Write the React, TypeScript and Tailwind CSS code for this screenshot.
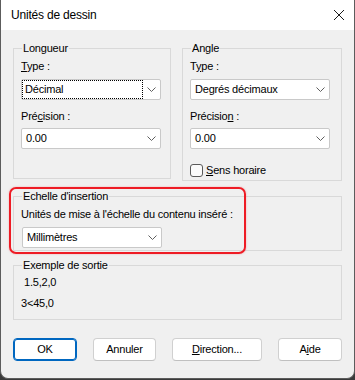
import { ReactNode } from "react";

function Chevron() {
  return (
    <svg width="9" height="5" viewBox="0 0 9 5" className="text-[#5f5f5f] shrink-0">
      <path d="M0.5 0.5 L4.5 4.5 L8.5 0.5" fill="none" stroke="currentColor" strokeWidth="1" />
    </svg>
  );
}

function Select({ value, focused }: { value: string; focused?: boolean }) {
  return (
    <div className="w-[140px] h-[21px] bg-white border border-[#c9c9c9] rounded-[2px] flex items-center justify-between pr-[4px]">
      {focused ? (
        <span className="h-[19px] w-[121px] border border-dotted border-black flex items-center pl-[2px]">
          {value}
        </span>
      ) : (
        <span className="pl-[4px]">{value}</span>
      )}
      <Chevron />
    </div>
  );
}

function Group({ title, className, children }: { title: string; className: string; children: ReactNode }) {
  return (
    <fieldset className={`border border-[#d9d9d9] px-[7px] ${className}`}>
      <legend className="px-[1px] ml-[1px] leading-[16px]">{title}</legend>
      {children}
    </fieldset>
  );
}

function Button({ children, primary, w }: { children: ReactNode; primary?: boolean; w: string }) {
  return (
    <div
      className={`${w} h-[23px] rounded-[4px] bg-white flex items-center justify-center ${
        primary ? "border border-[#0067c0] shadow-[inset_0_0_0_1px_#0067c0]" : "border border-[#d0d0d0] border-b-[#c0c0c0]"
      }`}
    >
      {children}
    </div>
  );
}

export default function App() {
  return (
    <div
      className="w-[355px] h-[380px] bg-[#3a3a3a] text-[11px] tracking-[-0.2px] text-black"
      style={{ fontFamily: '"Liberation Sans", Arial, sans-serif' }}
    >
      <div className="w-[355px] h-[379px] bg-[#f0f0f0] border-x border-b border-[#5c5c5c] rounded-b-[8px] overflow-hidden">
        <div className="h-[30px] bg-white flex items-center justify-between pl-[10px] pr-[9px]">
          <span className="text-[12px]">Unités de dessin</span>
          <svg width="12" height="12" viewBox="0 0 12 12">
            <path d="M1 1 L11 11 M11 1 L1 11" stroke="#1a1a1a" strokeWidth="1" />
          </svg>
        </div>

        <div className="px-[12px] pt-[10px]">
          <div className="flex items-start gap-[11px]">
            <Group title="Longueur" className="w-[158px] h-[139px]">
              <div className="pt-[2px] leading-[16px]">
                <span className="underline">T</span>ype :
              </div>
              <div className="mt-[5px]">
                <Select value="Décimal" focused />
              </div>
              <div className="mt-[8px] leading-[16px]">
                Pré<span className="underline">c</span>ision :
              </div>
              <div className="mt-[4px]">
                <Select value="0.00" />
              </div>
            </Group>

            <Group title="Angle" className="w-[160px] h-[141px]">
              <div className="pt-[2px] leading-[16px]">
                T<span className="underline">y</span>pe :
              </div>
              <div className="mt-[5px]">
                <Select value="Degrés décimaux" />
              </div>
              <div className="mt-[8px] leading-[16px]">
                Précisio<span className="underline">n</span> :
              </div>
              <div className="mt-[4px]">
                <Select value="0.00" />
              </div>
              <div className="mt-[13px] flex items-center gap-[3px]">
                <div className="w-[13px] h-[13px] rounded-[3px] border border-[#5a5a5a] bg-[#fbfbfb]" />
                <span className="leading-[16px]">
                  <span className="underline">S</span>ens horaire
                </span>
              </div>
            </Group>
          </div>

          <div className="relative mt-[7px]">
            <Group title="Echelle d'insertion" className="w-[329px] h-[63px]">
              <div className="pt-[2px] leading-[16px]">Unités de mise à l'échelle du contenu inséré :</div>
              <div className="mt-[5px] ml-px">
                <Select value="Millimètres" />
              </div>
            </Group>
            <div className="absolute left-[-4px] top-[-1px] w-[237px] h-[67px] border-2 border-[#ee1c25] rounded-[7px] shadow-[0_0_2px_rgba(238,28,37,0.35)]" />
          </div>

          <Group title="Exemple de sortie" className="mt-[6px] w-[329px] h-[63px]">
            <div className="pt-[1px] pl-[3px] leading-[16px]">1.5,2,0</div>
            <div className="mt-[5px] leading-[16px]">3&lt;45,0</div>
          </Group>

          <div className="mt-[18px] w-[329px] flex justify-between">
            <Button primary w="w-[64px]">OK</Button>
            <Button w="w-[63px]">Annuler</Button>
            <Button w="w-[90px]">
              <span>
                <span className="underline">D</span>irection...
              </span>
            </Button>
            <Button w="w-[64px]">
              <span>
                A<span className="underline">i</span>de
              </span>
            </Button>
          </div>
        </div>
      </div>
    </div>
  );
}
